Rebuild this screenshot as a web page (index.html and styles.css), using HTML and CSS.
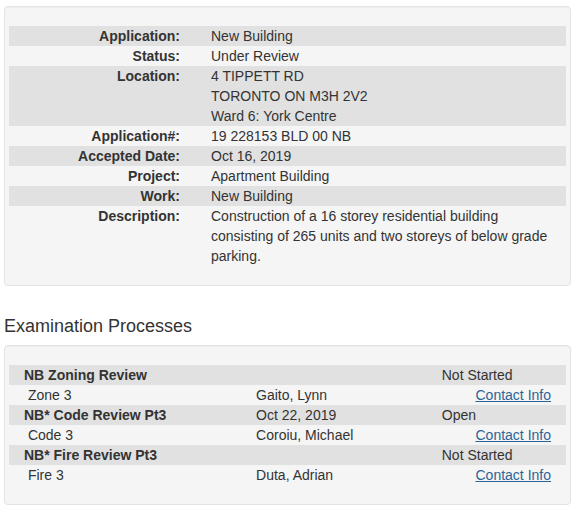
FILE: index.html
```html
<!DOCTYPE html>
<html>
	<head>
		<meta charset="UTF-8">
		<title>Application Details</title>
		<link rel="stylesheet" href="styles.css">
	</head>
	<body>
		<div class="page">
			<div class="well">
				<div class="info">
					<div class="info-row">
						<div class="label">Application:</div>
						<div class="value">New Building</div>
					</div>
					<div class="info-row">
						<div class="label">Status:</div>
						<div class="value">Under Review</div>
					</div>
					<div class="info-row">
						<div class="label">Location:</div>
						<div class="value">4 TIPPETT RD<br>TORONTO ON M3H 2V2<br>Ward 6: York Centre</div>
					</div>
					<div class="info-row">
						<div class="label">Application#:</div>
						<div class="value">19 228153 BLD 00 NB</div>
					</div>
					<div class="info-row">
						<div class="label">Accepted Date:</div>
						<div class="value">Oct 16, 2019</div>
					</div>
					<div class="info-row">
						<div class="label">Project:</div>
						<div class="value">Apartment Building</div>
					</div>
					<div class="info-row">
						<div class="label">Work:</div>
						<div class="value">New Building</div>
					</div>
					<div class="info-row">
						<div class="label">Description:</div>
						<div class="value">Construction of a 16 storey residential building consisting of 265 units and two storeys of below grade parking.</div>
					</div>
				</div>
			</div>

			<h4 class="section-title">Examination Processes</h4>

			<div class="well well-exam">
				<div class="exam">
					<div class="exam-row">
						<div class="cell name">NB Zoning Review</div>
						<div class="cell"></div>
						<div class="cell">Not Started</div>
					</div>
					<div class="exam-row">
						<div class="cell">&nbsp;Zone 3</div>
						<div class="cell">Gaito, Lynn</div>
						<div class="cell contact"><a href="#">Contact Info</a></div>
					</div>
					<div class="exam-row">
						<div class="cell name">NB* Code Review Pt3</div>
						<div class="cell">Oct 22, 2019</div>
						<div class="cell">Open</div>
					</div>
					<div class="exam-row">
						<div class="cell">&nbsp;Code 3</div>
						<div class="cell">Coroiu, Michael</div>
						<div class="cell contact"><a href="#">Contact Info</a></div>
					</div>
					<div class="exam-row">
						<div class="cell name">NB* Fire Review Pt3</div>
						<div class="cell"></div>
						<div class="cell">Not Started</div>
					</div>
					<div class="exam-row">
						<div class="cell">&nbsp;Fire 3</div>
						<div class="cell">Duta, Adrian</div>
						<div class="cell contact"><a href="#">Contact Info</a></div>
					</div>
				</div>
			</div>
		</div>
	</body>
</html>
```

FILE: styles.css
```css
body{
	margin: 0;
	background: #fff;
	color: #333;
	font-family: "Liberation Sans", Arial, Helvetica, sans-serif;
	font-size: 14px;
	line-height: 20px;
}
.page{
	padding: 6px 6px 0 4px;
}
.well{
	background: #f5f5f5;
	border: 1px solid #e3e3e3;
	border-radius: 4px;
	box-shadow: inset 0 1px 1px rgba(0,0,0,0.03);
	padding: 19px 4px 19px 4px;
}
.info-row{
	display: grid;
	grid-template-columns: 171px 1fr;
	column-gap: 31px;
}
.info-row:nth-child(odd),
.exam-row:nth-child(odd){
	background: #e1e1e1;
}
.label{
	text-align: right;
	font-weight: bold;
}
.value{
	padding-right: 14px;
}
.section-title{
	font-size: 18px;
	font-weight: normal;
	line-height: 20px;
	margin: 30px 0 9px 0;
}
.exam-row{
	display: grid;
	grid-template-columns: 5fr 4fr 3fr;
}
.cell{
	padding: 0 15px;
	white-space: nowrap;
}
.cell.name{
	font-weight: bold;
}
.cell.contact{
	text-align: right;
}
.cell.contact a{
	color: #2a6496;
	text-decoration: underline;
}
```
